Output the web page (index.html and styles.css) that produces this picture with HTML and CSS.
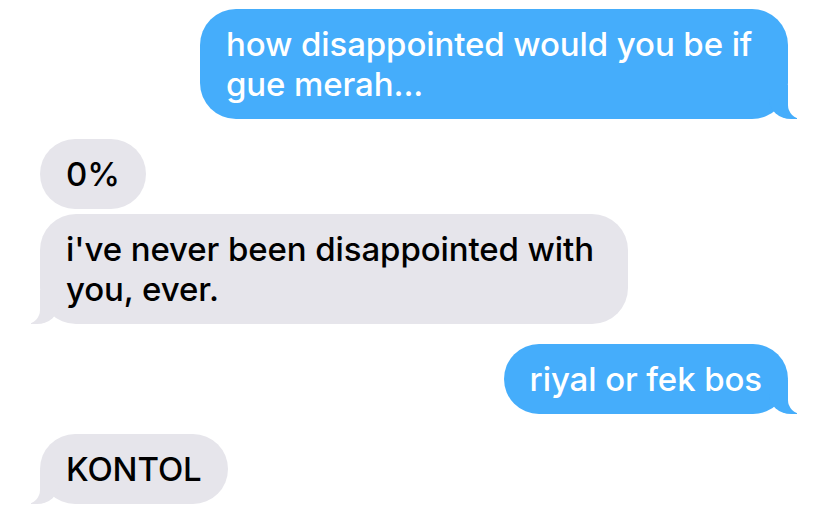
FILE: index.html
```html
<!DOCTYPE html>
<html lang="en">
<head>
  <meta charset="UTF-8">
  <meta name="viewport" content="width=device-width, initial-scale=1.0">
  <title>Messages</title>
  <link rel="stylesheet" href="styles.css">
</head>
<body>
  <div class="thread">
    <div class="bubble sent tail">how disappointed would you be if gue merah...</div>

    <div class="bubble received group-start">0%</div>
    <div class="bubble received tail">i've never been disappointed with you, ever.</div>

    <div class="bubble sent tail group-start">riyal or fek bos</div>

    <div class="bubble received tail group-start">KONTOL</div>
  </div>
</body>
</html>
```

FILE: styles.css
```css
body {
  margin: 0;
  background-color: #ffffff;
}

.thread {
  display: flex;
  flex-direction: column;
  padding: 9px 40px 0 40px;
  font-family: Inter, "Noto Sans", sans-serif;
  font-size: 33px;
  font-weight: 500;
  line-height: 40px;
  letter-spacing: -0.1px;
}

.bubble {
  position: relative;
  max-width: 536px;
  padding: 15px 26px;
  border-radius: 36px;
  margin-top: 5px;
}

.bubble:first-child {
  margin-top: 0;
}

.bubble.group-start {
  margin-top: 20px;
}

.sent {
  align-self: flex-end;
  background-color: #45adfb;
  color: #ffffff;
}

.received {
  align-self: flex-start;
  background-color: #e6e5eb;
  color: #000000;
}

/* tail */
.tail::before,
.tail::after {
  content: "";
  position: absolute;
  bottom: 0;
  height: 34px;
}

.sent.tail::before {
  right: -9px;
  width: 28px;
  background-color: #45adfb;
  border-bottom-left-radius: 22px 20px;
}

.sent.tail::after {
  right: -36px;
  width: 36px;
  background-color: #ffffff;
  border-bottom-left-radius: 14px;
}

.received.tail::before {
  left: -9px;
  width: 28px;
  background-color: #e6e5eb;
  border-bottom-right-radius: 22px 20px;
}

.received.tail::after {
  left: -36px;
  width: 36px;
  background-color: #ffffff;
  border-bottom-right-radius: 14px;
}
```
